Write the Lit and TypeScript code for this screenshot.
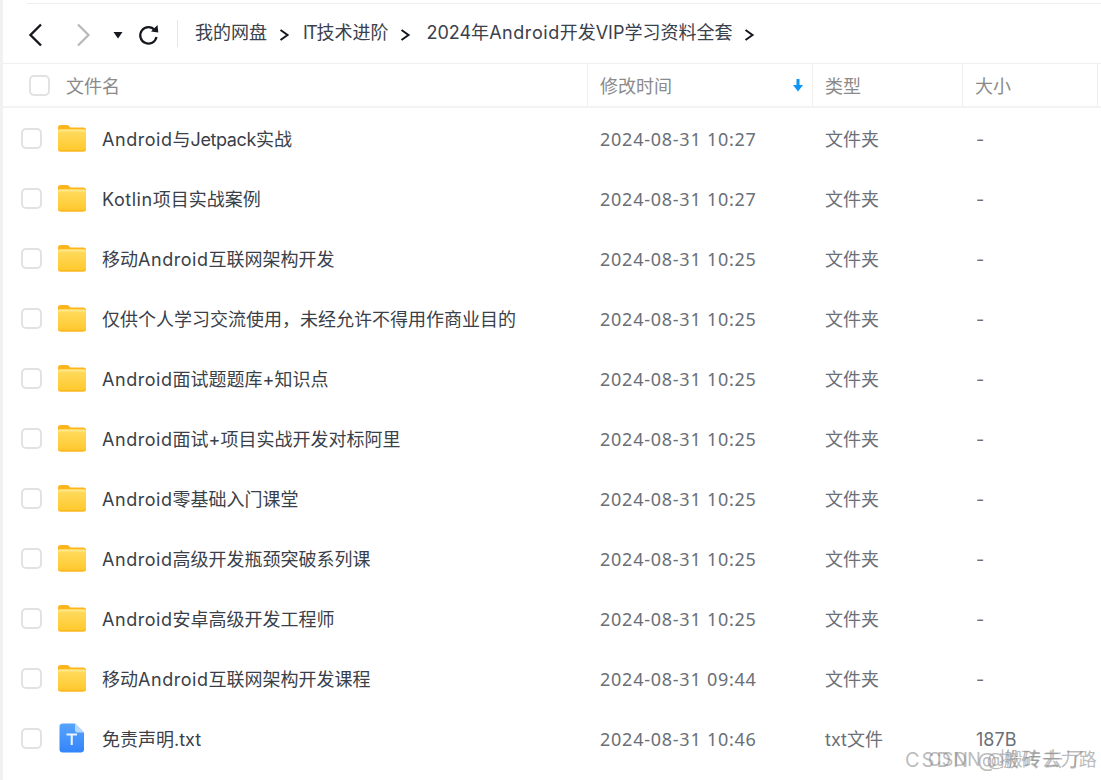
import { LitElement, html, css, svg } from "lit";
import { customElement } from "lit/decorators.js";

const rows: [string, string, string, string][] = [
  ["Android与Jetpack实战", "2024-08-31 10:27", "文件夹", "-"],
  ["Kotlin项目实战案例", "2024-08-31 10:27", "文件夹", "-"],
  ["移动Android互联网架构开发", "2024-08-31 10:25", "文件夹", "-"],
  ["仅供个人学习交流使用，未经允许不得用作商业目的", "2024-08-31 10:25", "文件夹", "-"],
  ["Android面试题题库+知识点", "2024-08-31 10:25", "文件夹", "-"],
  ["Android面试+项目实战开发对标阿里", "2024-08-31 10:25", "文件夹", "-"],
  ["Android零基础入门课堂", "2024-08-31 10:25", "文件夹", "-"],
  ["Android高级开发瓶颈突破系列课", "2024-08-31 10:25", "文件夹", "-"],
  ["Android安卓高级开发工程师", "2024-08-31 10:25", "文件夹", "-"],
  ["移动Android互联网架构开发课程", "2024-08-31 09:44", "文件夹", "-"],
  ["免责声明.txt", "2024-08-31 10:46", "txt文件", "187B"],
];

const folder = svg`<svg width="30" height="28" viewBox="0 0 30 28">
  <defs><linearGradient id="fg" x1="0" y1="0" x2="0" y2="1"><stop offset="0" stop-color="#ffdc62"/><stop offset="1" stop-color="#ffc82c"/></linearGradient></defs>
  <path d="M1 3.500C1 2 2 1 3.500 1h6.200c1 0 1.600.3 2.300 1l1.500 1.500H26.500C28 3.500 29 4.500 29 6v4H1z" fill="#fdb51d"/>
  <path d="M1 6.500C1 5.500 2 5 3 5h23.500C28 5 29 6 29 7.500V25c0 1.500-1 2.500-2.500 2.500h-23C2 27.500 1 26.500 1 25z" fill="url(#fg)"/>
  <path d="M1 25v-1c0 1.500 1 2 2.500 2h23c1.500 0 2.500-.5 2.500-2v1c0 1.500-1 2.500-2.500 2.500h-23C2 27.500 1 26.500 1 25z" fill="#fdb51d"/>
  <path d="M1 8c0-1.500 1-2 2-2h24c1 0 2 .5 2 2v1c0-1-1-1.500-2-1.500H3C2 7.500 1 8 1 9z" fill="#ffe58a"/>
</svg>`;

const txt = svg`<svg width="30" height="30" viewBox="0 0 30 30">
  <defs><linearGradient id="tg" x1="0" y1="0" x2="0" y2="1"><stop offset="0" stop-color="#56a4fb"/><stop offset="1" stop-color="#3484fb"/></linearGradient></defs>
  <path d="M5.500 0.500H18L27 9.500V26.500C27 28.200 25.700 29.500 24 29.500H5.500C3.800 29.500 2.500 28.200 2.500 26.500V3.500C2.500 1.800 3.800 .5 5.500 .5z" fill="url(#tg)"/>
  <path d="M18 .5L27 9.500H20.500C19 9.500 18 8.500 18 7z" fill="#b7d8ff"/>
  <path d="M9.500 10.500H20V12.500H15.800V22H13.700V12.500H9.500z" fill="#eaf4ff"/>
</svg>`;

const crumbArrow = html`<svg class="crumb-arrow" width="12" height="14" viewBox="0 0 12 14"><path d="M2.500 2L9.500 7L2.500 12" fill="none" stroke="#15181f" stroke-width="2"/></svg>`;

function nameParts(name: string) {
  return name.split(/(Android|Kotlin|Jetpack)/).map((p) =>
    p === "Android" || p === "Kotlin"
      ? html`<span class="wide">${p}</span>`
      : p === "Jetpack"
        ? html`<span class="tight">${p}</span>`
        : p
  );
}

@customElement("app-root")
export class AppRoot extends LitElement {
  static styles = css`
    :host {
      display: block;
      width: 1101px;
      height: 780px;
      position: relative;
      overflow: hidden;
      background: #fff;
      font-family: Inter, "Noto Sans CJK SC", sans-serif;
      font-size: 18px;
      color: #3a3f49;
    }
    .frame {
      height: 780px;
      border-left: 3px solid #f1f1f1;
      box-sizing: border-box;
      padding-top: 3px;
    }
    .topline { height: 1px; margin-left: 24px; background: #eeeeee; }
    .toolbar {
      height: 59px;
      display: flex;
      align-items: center;
      padding-left: 23px;
      color: #3a404c;
    }
    .nav { display: flex; margin-top: 2px; }
    .back { margin-right: 27px; }
    .drop { margin-left: 19px; }
    .reload { margin-left: 14px; }
    .sep { width: 1px; height: 27px; background: #e6e6e6; margin: 0 17px 0 17px; }
    .crumb { white-space: nowrap; margin-top: -6px; }
    .crumb.last { margin-left: 2px; }
    .it { letter-spacing: -1.5px; }
    .crumb-arrow { margin: 3px 13px 0 11px; }
    .wide { letter-spacing: 0.55px; }
    .tight { letter-spacing: -0.4px; }
    .head {
      display: grid;
      grid-template-columns: 585px 225px 150px 135px 1fr;
      height: 45px;
      border-top: 1px solid #f0f0f0;
      border-bottom: 2px solid #f3f3f3;
      box-sizing: border-box;
      color: #8a8a8a;
    }
    .hc {
      display: flex;
      align-items: center;
      border-right: 1px solid #eeeeee;
      padding-left: 12px;
      justify-content: space-between;
      padding-right: 8px;
    }
    .hc.name { padding-left: 26px; justify-content: flex-start; gap: 16px; }
    .hc.last { border-right: none; }
    .box {
      width: 21px;
      height: 21px;
      box-sizing: border-box;
      border: 2px solid #e2e2e2;
      border-radius: 5px;
      flex: none;
    }
    .row {
      display: grid;
      grid-template-columns: 585px 225px 150px 135px 1fr;
      height: 60px;
      align-items: center;
    }
    .n { display: flex; align-items: center; padding-left: 18px; color: #3a3f49; white-space: nowrap; }
    .n .icon { display: flex; margin: 0 15px; width: 30px; height: 30px; align-items: center; justify-content: center; }
    .c { padding-left: 12px; color: #6a6f78; white-space: nowrap; }
    .c.date { font-family: "Noto Sans", sans-serif; letter-spacing: 0.75px; padding-top: 2px; }
    .c.size { padding-left: 13px; padding-top: 2px; }
    .mark {
      position: absolute;
      top: 746px;
      white-space: nowrap;
      color: rgba(130, 130, 130, 0.55);
      line-height: 28px;
    }
    .m1 { left: 905px; font-size: 20px; letter-spacing: 2px; }
    .m2 { left: 928px; font-size: 18px; letter-spacing: 0.5px; }
  `;

  render() {
    return html`
      <div class="frame">
        <div class="topline"></div>
        <div class="toolbar">
          <div class="nav">
            <svg class="back" width="20" height="26" viewBox="0 0 20 26"><path d="M15 2.500L4.500 13L15 23.500" fill="none" stroke="#15181f" stroke-width="2.400"/></svg>
            <svg width="20" height="26" viewBox="0 0 20 26"><path d="M5 2.500L15.500 13L5 23.500" fill="none" stroke="#b8b8b8" stroke-width="2.200"/></svg>
            <svg class="drop" width="12" height="26" viewBox="0 0 12 26"><path d="M1.500 10H10.500L6 16.500z" fill="#15181f"/></svg>
            <svg class="reload" width="22" height="26" viewBox="0 0 22 26"><path d="M16.800 8.200A8.200 8.200 0 1 0 18.500 15" fill="none" stroke="#15181f" stroke-width="2.200"/><path d="M13 9.500L20.300 10.500L19.500 3z" fill="#15181f"/></svg>
          </div>
          <div class="sep"></div>
          <span class="crumb">我的网盘</span>${crumbArrow}
          <span class="crumb"><span class="it">IT</span>技术进阶</span>${crumbArrow}
          <span class="crumb last">2024年<span class="wide">Android</span>开发VIP学习资料全套</span>${crumbArrow}
        </div>
        <div class="head">
          <div class="hc name"><span class="box"></span><span>文件名</span></div>
          <div class="hc"><span>修改时间</span>
            <svg width="12" height="14" viewBox="0 0 12 14"><path d="M4.500 1H7.500V7H11L6 13.500L1 7H4.500z" fill="#0d94f5"/></svg>
          </div>
          <div class="hc">类型</div>
          <div class="hc">大小</div>
          <div class="hc last"></div>
        </div>
        <div class="list">
          ${rows.map(
            (r, i) => html`<div class="row">
              <div class="n">
                <span class="box"></span>
                <span class="icon">${i === 10 ? txt : folder}</span>
                <span>${nameParts(r[0])}</span>
              </div>
              <div class="c date">${r[1]}</div>
              <div class="c">${r[2]}</div>
              <div class="c size">${r[3]}</div>
            </div>`
          )}
        </div>
      </div>
      <div class="mark m1">CSDN @搬砖去了</div>
      <div class="mark m2">CSDN @搬砖去力路</div>
    `;
  }
}
